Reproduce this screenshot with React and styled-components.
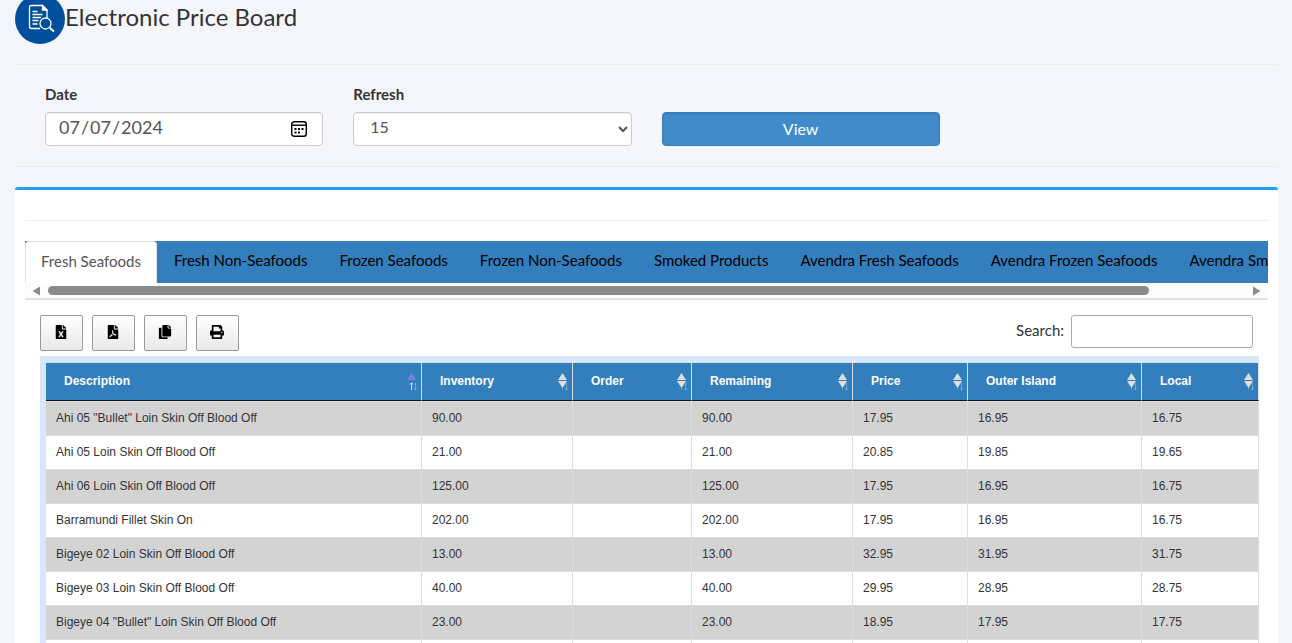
import React from 'react';
import styled, { createGlobalStyle, css } from 'styled-components';
import { FaCopy, FaFileExcel, FaFilePdf, FaPrint } from 'react-icons/fa';

const GlobalStyle = createGlobalStyle`
  *, *::before, *::after {
    box-sizing: border-box;
  }
  body {
    margin: 0;
    overflow: hidden;
    background: #f5f6fb;
    color: #333;
    font-family: Lato, sans-serif;
    font-size: 15px;
    line-height: 20px;
  }
`;

const Page = styled.main`
  padding: 0 14px 0 15px;
`;

const Header = styled.header`
  display: flex;
  margin-top: -6px;
  height: 71px;
  border-bottom: 1px solid #eaecee;
`;

const Title = styled.h1`
  margin: 9px 0 0;
  font-size: 24px;
  font-weight: 400;
  line-height: 28px;
`;

const Filters = styled.form`
  display: grid;
  grid-template-columns: repeat(4, 1fr);
  gap: 30px;
  align-items: end;
  padding: 19px 30px 20px;
  border-bottom: 1px solid #eaecee;
`;

const Field = styled.div`
  display: flex;
  flex-direction: column;
`;

const Label = styled.label`
  margin-bottom: 8px;
  font-weight: 700;
`;

const DateBox = styled.div`
  display: grid;
  align-items: center;

  > * {
    grid-area: 1 / 1;
  }
  > svg {
    justify-self: end;
    margin-right: 15px;
    pointer-events: none;
  }
`;

const control = css`
  width: 100%;
  height: 34px;
  border: 1px solid #ccc;
  border-radius: 4px;
  background: #fff;
  box-shadow: inset 0 1px 1px rgba(0, 0, 0, 0.08);
  color: #555;
  font-family: inherit;
`;

const DateInput = styled.input`
  ${control}
  padding: 0 12px 4px;
  font-size: 18px;

  &::-webkit-calendar-picker-indicator {
    opacity: 0;
  }
`;

const Select = styled.select`
  ${control}
  padding: 0 0 5px 12px;
  font-size: 16px;
`;

const ViewButton = styled.button`
  height: 34px;
  padding: 0 0 2px;
  border: 1px solid #357ebd;
  border-radius: 4px;
  background: #428bca;
  box-shadow: inset 0 1px 2px rgba(0, 0, 0, 0.12);
  color: #fff;
  font-family: inherit;
  font-size: 16px;
`;

const Card = styled.section`
  margin-top: 20px;
  padding: 30px 10px 0;
  border-top: 3px solid #22a0f6;
  border-radius: 3px;
  background: #fff;
`;

const Tabs = styled.nav`
  display: flex;
  height: 42px;
  margin-top: 20px;
  overflow: hidden;
  background: #337ebd;
`;

const Tab = styled.a`
  flex: none;
  padding: ${p => (p.$active ? 9 : 8)}px 15px;
  border: 1px solid ${p => (p.$active ? '#dee2e6' : 'transparent')};
  border-bottom: 0;
  border-radius: 4px 4px 0 0;
  background: ${p => (p.$active ? '#fff' : 'transparent')};
  color: ${p => (p.$active ? '#555' : '#000')};
  text-decoration: none;
  white-space: nowrap;

  &:first-child {
    margin-right: 1px;
  }
`;

const Rule = styled.div`
  border-top: 1px solid #eee;
`;

const ScrollBar = styled.div`
  display: flex;
  align-items: center;
  gap: 7px;
  height: 17px;
  padding: 0 7px;
  border-bottom: 2px solid #dee2e6;
  background: #fcfcfc;
`;

const ScrollArrow = styled.button`
  display: flex;
  padding: 0;
  border: 0;
  background: none;
`;

const Track = styled.div`
  flex: 1;
`;

const Thumb = styled.div`
  width: 92%;
  height: 9px;
  border-radius: 5px;
  background: #8b8b8b;
`;

const Panel = styled.div`
  padding: 15px 9px 0 15px;
`;

const Toolbar = styled.div`
  display: flex;
  align-items: flex-start;
  gap: 9px;
  height: 41px;
  padding-right: 6px;
`;

const ToolButton = styled.button`
  display: flex;
  align-items: center;
  justify-content: center;
  width: 43px;
  height: 36px;
  padding: 0 1px 3px 0;
  border: 1px solid #999;
  border-radius: 2px;
  background: linear-gradient(to bottom, #fff 0%, #e9e9e9 100%);
  color: #000;
  font-size: 14px;
`;

const SearchLabel = styled.label`
  display: flex;
  gap: 7px;
  margin-left: auto;
  line-height: 30px;
`;

const SearchInput = styled.input`
  width: 182px;
  height: 33px;
  padding: 4px;
  border: 1px solid #aaa;
  border-radius: 3px;
`;

const TableFrame = styled.div`
  padding: 6px 0 0 6px;
  background: #d9e7fd;
`;

const Table = styled.table`
  width: 100%;
  table-layout: fixed;
  border-spacing: 0;
  border-top: 1px solid #ddd;
  background: #fff;
  font-family: "Liberation Sans", Arial, sans-serif;
  font-size: 12px;
`;

const Th = styled.th`
  width: ${p => (p.$width ? `${p.$width}px` : 'auto')};
  height: 38px;
  padding: 0 3px 2px 18px;
  border-right: 1px solid #ddd;
  border-bottom: 1px solid #111;
  background: #337ebd;
  color: #fff;
  text-align: left;
`;

const Heading = styled.div`
  display: flex;
  align-items: center;
  justify-content: space-between;
`;

const Row = styled.tr`
  background: ${p => (p.$shaded ? '#d3d3d3' : '#fff')};
`;

const Td = styled.td`
  height: 34px;
  padding: 0 10px 2px;
  border-top: 1px solid #ddd;
  border-right: 1px solid #ddd;
`;

const tabs = [
  'Fresh Seafoods',
  'Fresh Non-Seafoods',
  'Frozen Seafoods',
  'Frozen Non-Seafoods',
  'Smoked Products',
  'Avendra Fresh Seafoods',
  'Avendra Frozen Seafoods',
  'Avendra Smoked Products',
];

const tools = [
  { name: 'Excel', Icon: FaFileExcel },
  { name: 'PDF', Icon: FaFilePdf },
  { name: 'Copy', Icon: FaCopy },
  { name: 'Print', Icon: FaPrint },
];

const columns = [
  { title: 'Description', sorted: true },
  { title: 'Inventory', width: 151 },
  { title: 'Order', width: 119 },
  { title: 'Remaining', width: 161 },
  { title: 'Price', width: 115 },
  { title: 'Outer Island', width: 174 },
  { title: 'Local', width: 117 },
];

const rows = [
  ['Ahi 05 "Bullet" Loin Skin Off Blood Off', '90.00', '', '90.00', '17.95', '16.95', '16.75'],
  ['Ahi 05 Loin Skin Off Blood Off', '21.00', '', '21.00', '20.85', '19.85', '19.65'],
  ['Ahi 06 Loin Skin Off Blood Off', '125.00', '', '125.00', '17.95', '16.95', '16.75'],
  ['Barramundi Fillet Skin On', '202.00', '', '202.00', '17.95', '16.95', '16.75'],
  ['Bigeye 02 Loin Skin Off Blood Off', '13.00', '', '13.00', '32.95', '31.95', '31.75'],
  ['Bigeye 03 Loin Skin Off Blood Off', '40.00', '', '40.00', '29.95', '28.95', '28.75'],
  ['Bigeye 04 "Bullet" Loin Skin Off Blood Off', '23.00', '', '23.00', '18.95', '17.95', '17.75'],
  ['', '', '', '', '', '', ''],
];

const Logo = () => (
  <svg width="50" height="50" viewBox="0 0 50 50" fill="none" aria-hidden="true">
    <circle cx="25" cy="25" r="25" fill="#004f9c" />
    <g stroke="#fff" strokeWidth="1.3">
      <path d="M25 34.5h-8.500a2 2 0 0 1-2-2v-19a2 2 0 0 1 2-2H27.500l4.500 4.500V24" />
      <path d="M27.500 11.500v4.500h4.500z" fill="#fff" />
      <path d="M17.500 17.500h5M17.500 20.500h10M17.500 23.500h8.500M17.500 26.500h6M17.500 30h5" />
      <circle cx="30.500" cy="29.500" r="5.500" />
      <path d="M34.500 33.500l2 2" />
      <path d="M35.500 34.500l3.500 3" strokeWidth="2.200" />
    </g>
  </svg>
);

const CalendarIcon = () => (
  <svg width="18" height="18" viewBox="0 0 18 18" fill="none" aria-hidden="true">
    <rect x="1.700" y="1.700" width="14.600" height="14.600" rx="2.500" stroke="#000" strokeWidth="1.400" />
    <path d="M2 5.200h14" stroke="#000" strokeWidth="1.400" />
    <path d="M4.500 9h2M8 9h2M11.500 9h2M4.500 12.500h2M8 12.500h2" stroke="#000" strokeWidth="2" />
  </svg>
);

const SortIcon = ({ sorted }) => (
  <svg width="11" height="18" viewBox="0 0 11 18" aria-hidden="true">
    <path d="M0 8L4.500 1L9 8z" fill={sorted ? '#7b7fdc' : '#ddd'} />
    {!sorted && <path d="M0 9L4.500 16L9 9z" fill="#ddd" />}
    <path d="M4.500 18v-7M3 12.500l1.500-1.500L6 12.500" fill="none" stroke="#fff" strokeOpacity={sorted ? 0.8 : 0.2} />
    <path d="M8.500 11v7M7 16.500l1.500 1.500L10 16.500" fill="none" stroke="#fff" strokeOpacity="0.3" />
  </svg>
);

const Arrow = ({ right }) => (
  <svg width="9" height="10" viewBox="0 0 9 10" aria-hidden="true">
    <path d={right ? 'M1 0.500L8.500 5L1 9.500z' : 'M8 0.500L0.500 5L8 9.500z'} fill="#8b8b8b" />
  </svg>
);

const App = () => (
  <>
    <GlobalStyle />
    <Page>
      <Header>
        <Logo />
        <Title>Electronic Price Board</Title>
      </Header>

      <Filters onSubmit={e => e.preventDefault()}>
        <Field>
          <Label htmlFor="date">Date</Label>
          <DateBox>
            <DateInput id="date" type="date" defaultValue="2024-07-07" />
            <CalendarIcon />
          </DateBox>
        </Field>
        <Field>
          <Label htmlFor="refresh">Refresh</Label>
          <Select id="refresh" defaultValue="15">
            <option>15</option>
            <option>30</option>
            <option>60</option>
          </Select>
        </Field>
        <ViewButton>View</ViewButton>
      </Filters>

      <Card>
        <Rule />
        <Tabs>
          {tabs.map((tab, i) => <Tab key={tab} href="#" $active={i === 0}>{tab}</Tab>)}
        </Tabs>
        <ScrollBar>
          <ScrollArrow type="button" aria-label="Scroll left"><Arrow /></ScrollArrow>
          <Track><Thumb /></Track>
          <ScrollArrow type="button" aria-label="Scroll right"><Arrow right /></ScrollArrow>
        </ScrollBar>

        <Panel>
          <Toolbar>
            {tools.map(({ name, Icon }) => (
              <ToolButton key={name} type="button" aria-label={name}><Icon /></ToolButton>
            ))}
            <SearchLabel>
              Search:
              <SearchInput type="search" />
            </SearchLabel>
          </Toolbar>
          <TableFrame>
            <Table>
              <thead>
                <tr>
                  {columns.map(({ title, width, sorted }) => (
                    <Th key={title} $width={width}>
                      <Heading>
                        {title}
                        <SortIcon sorted={sorted} />
                      </Heading>
                    </Th>
                  ))}
                </tr>
              </thead>
              <tbody>
                {rows.map((row, i) => (
                  <Row key={row[0]} $shaded={i % 2 === 0}>
                    {row.map((cell, j) => <Td key={columns[j].title}>{cell}</Td>)}
                  </Row>
                ))}
              </tbody>
            </Table>
          </TableFrame>
        </Panel>
      </Card>
    </Page>
  </>
);

export default App;
